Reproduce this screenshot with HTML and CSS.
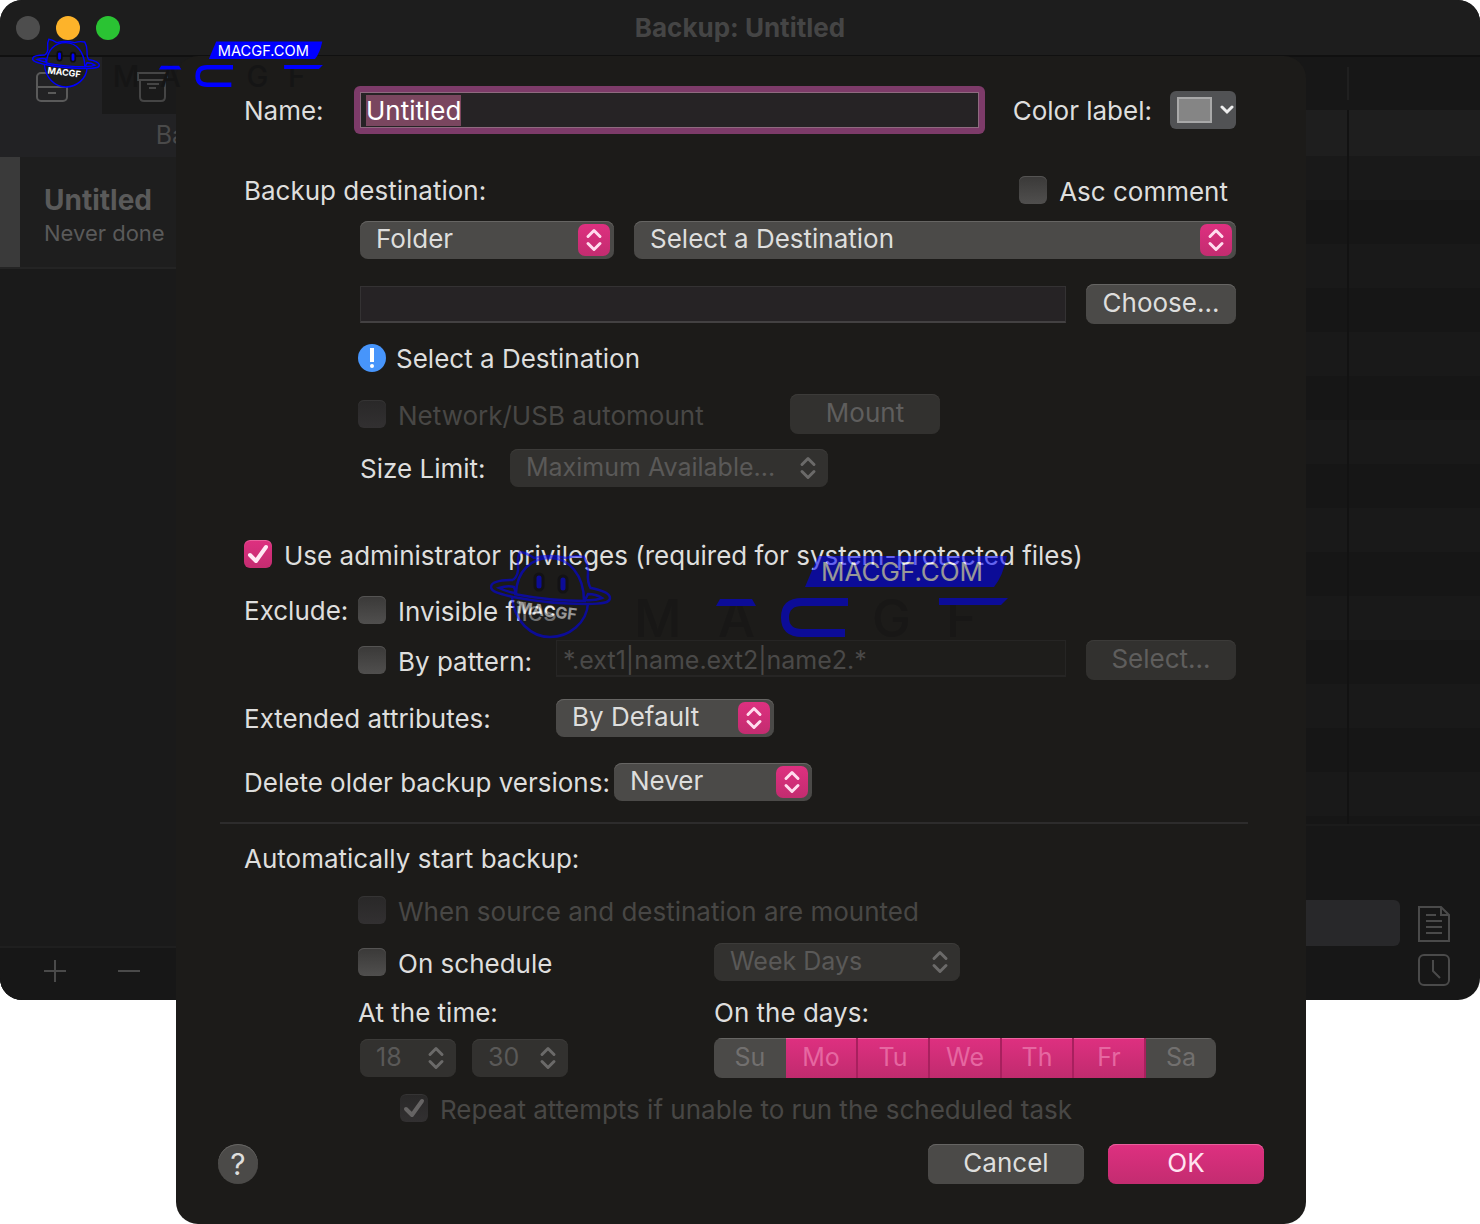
FILE: index.html
```html
<!DOCTYPE html>
<html lang="en">
<head>
    <meta charset="UTF-8">
    <meta name="viewport" content="width=device-width, initial-scale=1.0">
    <title>Backup: Untitled</title>
    <link rel="stylesheet" href="styles.css">
</head>
<body>
    <!-- Shared arrows of the pop-up menus -->
    <svg class="defs" width="0" height="0" aria-hidden="true">
        <symbol id="arrows" viewBox="0 0 32 32">
            <path d="M10 12.5l6-6 6 6M10 19.5l6 6 6-6" fill="none" stroke="currentColor" stroke-width="3" stroke-linecap="round" stroke-linejoin="round"/>
        </symbol>
    </svg>

    <div class="stage">
        <div class="window">
            <header class="titlebar">
                <div class="lights">
                    <span class="light"></span>
                    <span class="light light-yellow"></span>
                    <span class="light light-green"></span>
                </div>
                <h1>Backup: Untitled</h1>
            </header>
            <div class="panes">
                <aside class="sidebar">
                    <nav class="tabs">
                        <a class="tab active" href="#backup" aria-label="Backup">
                            <svg width="34" height="34" viewBox="0 0 34 34" fill="none" stroke="currentColor" stroke-width="2">
                                <rect x="2" y="4" width="30" height="28" rx="4"/>
                                <path d="M2 18h30M13 24h8"/>
                            </svg>
                        </a>
                        <a class="tab" href="#archive" aria-label="Archive">
                            <svg width="34" height="34" viewBox="0 0 34 34" fill="none" stroke="currentColor" stroke-width="2">
                                <path d="M1 4h29v7H1zM3 11v17q0 4 4 4h17q4 0 4-4V11M10 15h12M12 19h7"/>
                            </svg>
                        </a>
                    </nav>
                    <h2 class="sidebar-title">Backup</h2>
                    <div class="task">
                        <strong>Untitled</strong>
                        <span>Never done</span>
                    </div>
                    <div class="sidebar-footer">
                        <button type="button" aria-label="Add">
                            <svg width="22" height="22" viewBox="0 0 22 22" stroke="currentColor" stroke-width="2"><path d="M0 11h22M11 0v22"/></svg>
                        </button>
                        <button type="button" aria-label="Remove">
                            <svg width="22" height="22" viewBox="0 0 22 22" stroke="currentColor" stroke-width="2"><path d="M0 11h22"/></svg>
                        </button>
                    </div>
                </aside>
                <section class="content">
                    <div class="list-header"><span></span></div>
                    <div class="list"><div class="list-column"></div></div>
                    <div class="log">
                        <div class="log-field"></div>
                        <div class="log-icons">
                            <svg width="32" height="36" viewBox="0 0 32 36" fill="none" stroke="currentColor" stroke-width="2">
                                <path d="M1 1h22l8 8v26H1zM23 1v8h8M8 9h10M8 15h16M8 21h16M8 27h16"/>
                            </svg>
                            <svg width="32" height="32" viewBox="0 0 32 32" fill="none" stroke="currentColor" stroke-width="2">
                                <rect x="1" y="1" width="30" height="30" rx="5"/>
                                <path d="M15 6v11l7 7"/>
                            </svg>
                        </div>
                    </div>
                </section>
            </div>
        </div>

        <form class="sheet">
            <div class="row">
                <label class="name-label" for="name">Name:</label>
                <div class="focus-ring"><input type="text" id="name" value="Untitled"></div>
                <label class="color-label" for="color">Color label:</label>
                <button type="button" class="color-button" id="color">
                    <span class="swatch"></span>
                    <svg width="14" height="10" viewBox="0 0 14 10"><path d="M2 2l5 5 5-5" fill="none" stroke="#eee" stroke-width="3" stroke-linecap="round"/></svg>
                </button>
            </div>

            <div class="row gap-36 between">
                <span class="text">Backup destination:</span>
                <label class="check asc"><input type="checkbox"> <span>Asc comment</span></label>
            </div>
            <div class="row gap-10 indent spaced">
                <div class="popup w-folder">
                    <select aria-label="Destination type"><option>Folder</option></select>
                    <svg><use href="#arrows"/></svg>
                </div>
                <div class="popup grow">
                    <select aria-label="Destination"><option>Select a Destination</option></select>
                    <svg><use href="#arrows"/></svg>
                </div>
            </div>
            <div class="row gap-24 indent spaced">
                <input class="field grow" type="text" aria-label="Path">
                <button type="button" class="btn">Choose...</button>
            </div>
            <div class="row gap-14 indent-check notice">
                <svg width="28" height="28" viewBox="0 0 28 28">
                    <circle cx="14" cy="14" r="14" fill="#4795fb"/>
                    <path d="M14 4v14" stroke="#fff" stroke-width="4"/>
                    <circle cx="14" cy="22" r="2" fill="#fff"/>
                </svg>
                <span class="text">Select a Destination</span>
            </div>
            <div class="row gap-16 indent-check">
                <label class="check automount"><input type="checkbox" disabled> <span>Network/USB automount</span></label>
                <button type="button" class="btn" disabled>Mount</button>
            </div>
            <div class="row gap-14 indent">
                <label class="size-label" for="size">Size Limit:</label>
                <div class="popup w-size disabled">
                    <select id="size" disabled><option>Maximum Available...</option></select>
                    <svg><use href="#arrows"/></svg>
                </div>
            </div>

            <div class="row gap-46">
                <label class="check"><input type="checkbox" checked> <span>Use administrator privileges (required for system-protected files)</span></label>
            </div>
            <div class="row gap-16">
                <span class="text exclude-label">Exclude:</span>
                <label class="check"><input type="checkbox"> <span>Invisible files</span></label>
            </div>
            <div class="row gap-10 indent-check">
                <label class="check pattern"><input type="checkbox"> <span>By pattern:</span></label>
                <div class="pattern-field">
                    <input class="field grow" type="text" aria-label="Pattern" placeholder="*.ext1|name.ext2|name2.*" disabled>
                    <button type="button" class="btn" disabled>Select...</button>
                </div>
            </div>
            <div class="row gap-18">
                <label class="attributes-label" for="attributes">Extended attributes:</label>
                <div class="popup w-attributes">
                    <select id="attributes"><option>By Default</option></select>
                    <svg><use href="#arrows"/></svg>
                </div>
            </div>
            <div class="row gap-24">
                <label class="delete-label" for="older">Delete older backup versions:</label>
                <div class="popup w-older">
                    <select id="older"><option>Never</option></select>
                    <svg><use href="#arrows"/></svg>
                </div>
            </div>

            <hr>

            <div class="row gap-14">
                <span class="text">Automatically start backup:</span>
            </div>
            <div class="row gap-12 indent-check">
                <label class="check"><input type="checkbox" disabled> <span>When source and destination are mounted</span></label>
            </div>
            <div class="row gap-12 indent-check">
                <label class="check schedule-left"><input type="checkbox"> <span>On schedule</span></label>
                <div class="popup w-repeat disabled">
                    <select aria-label="Repeat" disabled><option>Week Days</option></select>
                    <svg><use href="#arrows"/></svg>
                </div>
            </div>
            <div class="row gap-10 indent-check">
                <span class="text schedule-left">At the time:</span>
                <span class="text">On the days:</span>
            </div>
            <div class="row gap-6 indent-check">
                <div class="schedule-left times">
                    <div class="popup w-time disabled">
                        <select aria-label="Hour" disabled><option>18</option></select>
                        <svg><use href="#arrows"/></svg>
                    </div>
                    <div class="popup w-time disabled">
                        <select aria-label="Minute" disabled><option>30</option></select>
                        <svg><use href="#arrows"/></svg>
                    </div>
                </div>
                <div class="days">
                    <button type="button" disabled>Su</button>
                    <button type="button" class="on" disabled>Mo</button>
                    <button type="button" class="on" disabled>Tu</button>
                    <button type="button" class="on" disabled>We</button>
                    <button type="button" class="on" disabled>Th</button>
                    <button type="button" class="on" disabled>Fr</button>
                    <button type="button" disabled>Sa</button>
                </div>
            </div>
            <div class="row gap-10 indent-repeat">
                <label class="check"><input type="checkbox" checked disabled> <span>Repeat attempts if unable to run the scheduled task</span></label>
            </div>

            <div class="actions">
                <button type="button" class="help">?</button>
                <button type="button" class="btn">Cancel</button>
                <button type="submit" class="btn primary">OK</button>
            </div>
        </form>

        <svg class="brand brand-large" viewBox="0 0 520 110" aria-hidden="true">
            <g id="brand">
                <g fill="#151515" font-size="52" font-weight="500">
                    <text x="144" y="87">M</text>
                    <text x="228" y="87">A</text>
                    <text x="382" y="87">G</text>
                    <text x="456" y="87">F</text>
                </g>
                <g fill="#00f">
                    <path d="M230 49h32l4 7h-40z"/>
                    <path d="M449 48h69l-7 7h-62z"/>
                    <path d="M328 6h189q-4 20-13 31H315z"/>
                </g>
                <path d="M358 52h-46q-17 0-17 15.500t17 15.500h43" fill="none" stroke="#00f" stroke-width="8"/>
                <text x="331" y="31" fill="#fff" font-size="26">MACGF.COM</text>
                <path d="M22 47c2 24 19 40 38 40s37-14 38-34z" fill="#1b1b1c"/>
                <g fill="none" stroke="#00f" stroke-width="2.500">
                    <path d="M23 30q6-5 5-14-1-8 2-14 7 1 14 6 16-4 32 0 9-3 18-1 4 7 4 16-1 9 3 16"/>
                    <path d="M26 43c1-22 15-35 34-35s34 17 34 43"/>
                    <path d="M23 30C10 30 1 32 1 37s10 7 22 10q36 7 74 7c15 0 23-1 23-6s-9-8-19-10"/>
                    <path d="M24 44q36 7 72 7"/>
                    <path d="M9 38q9-3 15-1l2 6q-9-1-17-5zM95 50l3-6q8 0 14 4-8 3-17 2z"/>
                    <path d="M22 47c2 24 19 40 38 40s37-14 38-34"/>
                </g>
                <g fill="#00f" stroke="#0c0c10" stroke-width="3">
                    <rect x="45" y="24" width="8" height="16" rx="4"/>
                    <rect x="69" y="26" width="8" height="16" rx="4"/>
                </g>
                <text transform="translate(27 63) rotate(7)" fill="#fff" font-weight="700" font-size="16">MACGF</text>
            </g>
        </svg>
        <svg class="brand brand-small" viewBox="0 0 520 110" aria-hidden="true"><use href="#brand"/></svg>
    </div>

    <script>
        const nameField = document.getElementById('name');
        nameField.focus();
        nameField.select();
    </script>
</body>
</html>
```
FILE: styles.css
```css
* {
    box-sizing: border-box;
}
body {
    margin: 0;
    background: #fff;
    color: #dededd;
    font-family: Inter, "Liberation Sans", sans-serif;
    font-size: 26px;
    line-height: 32px;
}
input, select, button {
    font: inherit;
    color: inherit;
    margin: 0;
}
.defs {
    position: absolute;
}

/* The window and the sheet share one grid cell */
.stage {
    position: relative;
    display: grid;
}
.window, .sheet {
    grid-area: 1 / 1;
}

/* Window behind the sheet */
.window {
    display: flex;
    flex-direction: column;
    margin-bottom: 224px;
    border-radius: 22px;
    background: #171717;
    color: #4a4a4a;
    overflow: hidden;
}
.titlebar {
    display: grid;
    align-items: center;
    height: 57px;
    padding: 0 16px;
    background: #1d1d1d;
    border-bottom: 2px solid #101010;
}
.titlebar h1 {
    grid-area: 1 / 1;
    margin: 0;
    text-align: center;
    font-size: 26px;
    font-weight: 700;
    color: #454545;
}
.lights {
    grid-area: 1 / 1;
    display: flex;
    gap: 16px;
}
.light {
    width: 24px;
    height: 24px;
    border-radius: 50%;
    background: #4d4d4d;
}
.light-yellow {
    background: #fdb32a;
}
.light-green {
    background: #2ac333;
}
.panes {
    flex: 1;
    display: flex;
}
.sidebar {
    display: flex;
    flex-direction: column;
    width: 400px;
    background: #1a1a1a;
}
.tabs {
    display: flex;
    height: 57px;
    background: #1a1a1a;
}
.tab {
    width: 102px;
    padding: 12px 35px;
    color: #454545;
}
.tab.active {
    background: #222224;
    color: #5a5a5a;
}
.sidebar-title {
    margin: 0;
    padding: 5px;
    height: 43px;
    background: #222224;
    text-align: center;
    font-size: 25px;
    font-weight: 400;
}
.task {
    display: flex;
    flex-direction: column;
    height: 112px;
    padding: 26px 24px 26px 44px;
    border-bottom: 2px solid #242424;
    background: linear-gradient(#3a3a3a, #3a3a3a) 0 0 / 20px 100% no-repeat, #1e1e1e;
    color: #5a5a5a;
    font-size: 22px;
}
.task strong {
    font-size: 28px;
    line-height: 34px;
}
.sidebar-footer {
    display: flex;
    gap: 52px;
    margin-top: auto;
    height: 54px;
    padding: 0 44px;
    border-top: 2px solid #1f1f1f;
    background: #171717;
}
.sidebar-footer button {
    display: flex;
    align-items: center;
    width: 22px;
    padding: 0 0 6px;
    border: 0;
    background: none;
}
.content {
    flex: 1;
    display: flex;
    flex-direction: column;
}
.list-header {
    height: 53px;
    padding: 10px 131px 10px 0;
}
.list-header span {
    display: block;
    height: 100%;
    border-right: 2px solid #202020;
}
.list {
    flex: 1;
    padding-right: 131px;
    background: linear-gradient(#1e1e1e, #1e1e1e) 0 0 / 100% 46px no-repeat,
        repeating-linear-gradient(#191919 0 44px, #161616 44px 88px) 0 46px;
}
.list-column {
    height: 100%;
    border-right: 2px solid #121212;
}
.log {
    display: flex;
    gap: 18px;
    height: 176px;
    padding: 74px 30px 14px;
    border-top: 2px solid #1b1b1b;
}
.log-field {
    flex: 1;
    height: 46px;
    border-radius: 6px;
    background: #28282a;
}
.log-icons {
    display: flex;
    flex-direction: column;
    gap: 12px;
    padding-top: 6px;
}

/* Sheet */
.sheet {
    z-index: 1;
    margin: 56px 174px 0 176px;
    padding: 30px 42px 40px;
    border-radius: 22px;
    background: #1c1b19;
}
.row {
    display: flex;
    align-items: center;
    height: 40px;
    padding: 0 28px 0 26px;
}
.row:first-child {
    height: 48px;
}
.gap-6 { margin-top: 6px; }
.gap-10 { margin-top: 10px; }
.gap-12 { margin-top: 12px; }
.gap-14 { margin-top: 14px; }
.gap-16 { margin-top: 16px; }
.gap-18 { margin-top: 18px; }
.gap-24 { margin-top: 24px; }
.gap-36 { margin-top: 36px; }
.gap-46 { margin-top: 46px; }
.indent { padding-left: 142px; }
.indent-check { padding-left: 140px; }
.indent-repeat { padding-left: 182px; }
.spaced { gap: 20px; }
.between { justify-content: space-between; }
.grow { flex: 1; }
.row > label, .text {
    padding-top: 2px;
    white-space: nowrap;
}
.notice {
    gap: 10px;
}
.name-label { width: 110px; }
.exclude-label { width: 114px; }
.size-label { width: 150px; }
.attributes-label { width: 312px; }
.delete-label { width: 370px; }
.schedule-left { width: 356px; }
.automount { width: 432px; }
.pattern { width: 198px; }
.color-label {
    margin: 0 18px 0 28px;
}

.focus-ring {
    flex: 1;
    padding: 6px;
    border-radius: 6px;
    background: #7d3b69;
}
.focus-ring input {
    display: block;
    width: 100%;
    height: 36px;
    padding: 0 5px;
    border: 1px solid #8f6a80;
    outline: 0;
    background: #262325;
    color: #fff;
    line-height: 34px;
}
.focus-ring input::selection {
    background: #7a465f;
    color: #fff;
}
.color-button {
    display: flex;
    align-items: center;
    gap: 8px;
    width: 66px;
    height: 38px;
    padding: 0 1px 0 7px;
    border: 0;
    border-radius: 6px;
    background: #515254;
}
.swatch {
    flex: none;
    width: 35px;
    height: 26px;
    border: 2px solid #a9a9a9;
    background: #858585;
}
.field {
    min-width: 0;
    height: 37px;
    padding: 0 6px;
    border: 1px solid #343233;
    border-bottom: 2px solid #434142;
    background: #262325;
}
.field:disabled {
    padding-top: 3px;
    border-color: #262524;
    background: #1e1d1b;
    font-size: 25px;
}
.field::placeholder {
    color: #4a4948;
    opacity: 1;
}
.pattern-field {
    flex: 1;
    display: flex;
    gap: 20px;
}

.check {
    display: flex;
    align-items: center;
    gap: 12px;
    white-space: nowrap;
}
.row > .check {
    padding: 0;
}
.check span {
    padding-top: 3px;
}
.asc {
    margin-right: 8px;
}
.check input {
    flex: none;
    appearance: none;
    width: 28px;
    height: 28px;
    border-radius: 6px;
    background: linear-gradient(#3a3938, #504f4e);
    box-shadow: inset 0 1px #555453;
}
.check input:checked {
    background: url("data:image/svg+xml,%3Csvg xmlns='http://www.w3.org/2000/svg' viewBox='0 0 28 28'%3E%3Cpath d='M6 15l6 6L22 7' fill='none' stroke='%23ffe8f4' stroke-width='4' stroke-linecap='round' stroke-linejoin='round'/%3E%3C/svg%3E"),
        linear-gradient(#de3080, #c32c70);
    box-shadow: inset 0 1px #e8609c;
}
.check input:disabled {
    background: linear-gradient(#292828, #323031);
    box-shadow: inset 0 1px #353434;
}
.check input:checked:disabled {
    background: url("data:image/svg+xml,%3Csvg xmlns='http://www.w3.org/2000/svg' viewBox='0 0 28 28'%3E%3Cpath d='M6 15l6 6L22 7' fill='none' stroke='%23666464' stroke-width='4' stroke-linecap='round' stroke-linejoin='round'/%3E%3C/svg%3E"),
        linear-gradient(#292828, #323031);
}
.check input:disabled + span {
    color: #484745;
}

/* Pop-up menus */
.popup {
    display: grid;
    align-items: center;
    height: 38px;
    border-radius: 8px;
    background: #4b4a48;
    box-shadow: inset 0 1px #666563;
}
.popup select {
    grid-area: 1 / 1;
    appearance: none;
    width: 100%;
    height: 100%;
    padding: 0 16px 3px;
    border: 0;
    background: none;
}
.popup svg {
    grid-area: 1 / 1;
    justify-self: end;
    width: 32px;
    height: 32px;
    margin-right: 4px;
    border-radius: 7px;
    background: linear-gradient(#de3080, #c32c70);
    color: #ffdcee;
    pointer-events: none;
}
.popup.disabled {
    background: #32312f;
    box-shadow: inset 0 1px #3c3b39;
    color: #5a5958;
}
.popup.disabled select {
    color: #5a5958;
    font-size: 25px;
    opacity: 1;
}
.popup.disabled svg {
    background: none;
    color: #6b6a69;
}
.w-folder { width: 254px; }
.w-size { width: 318px; }
.w-attributes { width: 218px; }
.w-older { width: 198px; }
.w-repeat { width: 246px; }
.w-time { width: 96px; }

.times {
    display: flex;
    gap: 16px;
    padding-left: 2px;
}
.btn {
    width: 150px;
    height: 40px;
    padding: 0 0 2px;
    border: 0;
    border-radius: 8px;
    background: #4b4a48;
    box-shadow: inset 0 1px #666563;
}
.btn:disabled {
    background: #32312f;
    box-shadow: inset 0 1px #3c3b39;
    color: #5f5e5d;
}
.days {
    display: flex;
    height: 40px;
    border-radius: 8px;
    overflow: hidden;
}
.days button {
    width: 72px;
    padding: 0 0 2px;
    border: 0;
    background: #4b4a48;
    box-shadow: inset 0 1px #666563;
    color: #72706f;
    font-size: 25px;
}
.days button:last-child {
    width: 70px;
}
.days .on {
    border-right: 2px solid #a8205e;
    background: linear-gradient(#de3080, #c02b6e);
    box-shadow: inset 0 1px #ec64a0;
    color: #e667a1;
}
hr {
    height: 2px;
    margin: 20px 16px 0 2px;
    border: 0;
    background: #2d2c2c;
}
.actions {
    display: flex;
    align-items: center;
    gap: 24px;
    margin-top: 16px;
}
.actions .btn {
    width: 156px;
}
.actions .primary {
    background: linear-gradient(#de3080, #c32c70);
    box-shadow: inset 0 1px #e8609c;
    color: #ffe4f1;
}
.help {
    width: 40px;
    height: 40px;
    margin-right: auto;
    padding: 0;
    border: 0;
    border-radius: 50%;
    background: #4b4a48;
    box-shadow: inset 0 1px #666563;
    font-size: 30px;
}

/* Brand marks laid over the page */
.brand {
    position: absolute;
    z-index: 2;
    pointer-events: none;
}
.brand-small {
    left: 32px;
    top: 38px;
    width: 292px;
    height: 62px;
}
.brand-large {
    left: 490px;
    top: 550px;
    width: 520px;
    height: 110px;
    opacity: 0.55;
}
```
